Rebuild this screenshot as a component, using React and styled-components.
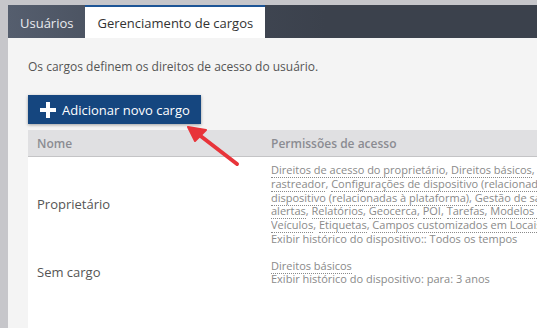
import React from 'react'
import styled, { createGlobalStyle } from 'styled-components'

const GlobalStyle = createGlobalStyle`
    html, body {
        margin: 0;
        padding: 0;
        background: #c6c6ca;
        font-family: "Open Sans", "Liberation Sans", sans-serif;
        overflow: hidden;
    }
`

const permissions = [
    ['Direitos de acesso do proprietário', 'Direitos básicos', 'Configurações do'],
    ['rastreador', 'Configurações de dispositivo (relacionadas ao rastreador)', 'Configurações do'],
    ['dispositivo (relacionadas à plataforma)', 'Gestão de saúde do veículo', 'Notificações de'],
    ['alertas', 'Relatórios', 'Geocerca', 'POI', 'Tarefas', 'Modelos de formulário', 'Mensagens'],
    ['Veículos', 'Etiquetas', 'Campos customizados em Locais'],
]

const App = () => {
    return (
        <>
            <GlobalStyle />
            <Frame>
                <TabBar>
                    <Tab>Usuários</Tab>
                    <Tab active>Gerenciamento de cargos</Tab>
                </TabBar>
                <Content>
                    <Intro>Os cargos definem os direitos de acesso do usuário.</Intro>
                    <AddButton>
                        <svg width="16" height="16" viewBox="0 0 16 16">
                            <path d="M6 0h4v6h6v4h-6v6h-4v-6h-6v-4h6z" fill="#fff" />
                        </svg>
                        Adicionar novo cargo
                    </AddButton>
                    <Table>
                        <HeadRow>
                            <HeadCell>Nome</HeadCell>
                            <HeadCell flush>Permissões de acesso</HeadCell>
                        </HeadRow>
                        <Row>
                            <NameCell>Proprietário</NameCell>
                            <PermCell>
                                {permissions.map((line, i) => (
                                    <Line key={i}>
                                        {line.map((p, j) => (
                                            <React.Fragment key={j}>
                                                <Perm>{p}</Perm>{', '}
                                            </React.Fragment>
                                        ))}
                                    </Line>
                                ))}
                                <Line>Exibir histórico do dispositivo:: Todos os tempos</Line>
                            </PermCell>
                        </Row>
                        <Row>
                            <NameCell>Sem cargo</NameCell>
                            <PermCell>
                                <Line><Perm>Direitos básicos</Perm></Line>
                                <Line>Exibir histórico do dispositivo: para: 3 anos</Line>
                            </PermCell>
                        </Row>
                    </Table>
                </Content>
                <Arrow width="60" height="45" viewBox="0 0 60 45">
                    <path d="M53 40 L14 10" stroke="#e8343a" strokeWidth="4" strokeLinecap="round" />
                    <path d="M4 3 L22 6 L11 17 Z" fill="#e8343a" stroke="#e8343a" strokeWidth="2" strokeLinejoin="round" />
                </Arrow>
            </Frame>
        </>
    )
}

export default App

const Frame = styled.div`
    position: relative;
    padding: 5px 0 0 8px;
    height: 328px;
    box-sizing: border-box;
`

const TabBar = styled.div`
    display: flex;
    height: 33px;
    background: linear-gradient(to right, #555e6e 0%, #434a57 30%, #3b414c 60%, #3b414c 100%);
`

const Tab = styled.div`
    display: flex;
    align-items: center;
    padding: 0 12px;
    font-size: 13px;
    color: ${props => props.active ? '#333' : '#e9ebef'};
    background: ${props => props.active ? '#fff' : 'transparent'};
    border-top: 2px solid ${props => props.active ? '#1d5596' : 'transparent'};
    box-sizing: border-box;
`

const Content = styled.div`
    background: #f4f4f4;
    padding: 20px 0 0 20px;
    height: 290px;
    box-sizing: border-box;
`

const Intro = styled.div`
    font-size: 12px;
    color: #555;
    line-height: 17px;
`

const AddButton = styled.div`
    display: inline-flex;
    align-items: center;
    gap: 6px;
    margin-top: 20px;
    height: 29px;
    padding: 0 11px 0 12px;
    background: #15467f;
    color: #fff;
    font-size: 13px;
    box-shadow: 0 1px 3px rgba(0, 0, 0, 0.35);
`

const Table = styled.div`
    margin-top: 6px;
    background: #fff;
    height: 200px;
`

const HeadRow = styled.div`
    display: grid;
    grid-template-columns: 243px 1fr;
    height: 26px;
    align-items: center;
    background: #e0e0e2;
    border-bottom: 1px solid #c4c4c6;
`

const HeadCell = styled.div`
    padding-left: ${props => props.flush ? '0' : '9px'};
    font-size: 12px;
    font-weight: 600;
    color: #8b8c92;
    white-space: nowrap;
`

const Row = styled.div`
    display: grid;
    grid-template-columns: 243px 1fr;
    align-items: center;
    padding: 6px 0 7px;
    overflow: hidden;
`

const NameCell = styled.div`
    padding-left: 9px;
    font-size: 13px;
    color: #555;
`

const PermCell = styled.div`
    font-size: 11px;
    line-height: 13.75px;
    color: #8a8a8a;
    white-space: nowrap;
    overflow: hidden;
`

const Line = styled.div``

const Perm = styled.span`
    border-bottom: 1px dotted #8a8a8a;
`

const Arrow = styled.svg`
    position: absolute;
    left: 184px;
    top: 124px;
`
